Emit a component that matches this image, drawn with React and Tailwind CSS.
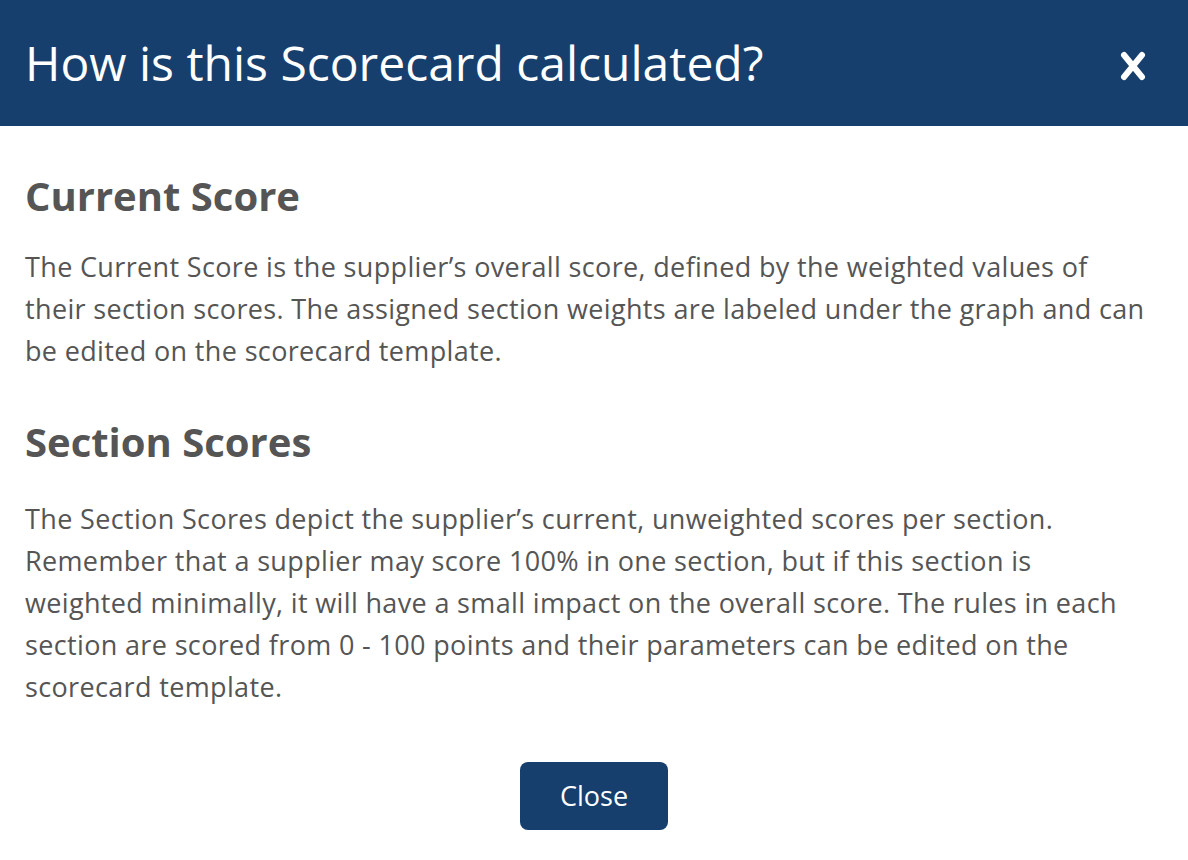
export default function App() {
  return (
    <div className="w-[1188px] h-[860px] bg-white font-['Open_Sans',sans-serif] text-[#555555]">
      {/* Header */}
      <div className="h-[126px] bg-[#173f6e] flex items-center justify-between pl-[25px] pr-[42px]">
        <h1 className="text-[48px] leading-none text-white font-normal">How is this Scorecard calculated?</h1>
        <button className="text-white mt-[5px]">
          <svg width="26" height="30" viewBox="0 0 26 30">
            <path d="M4 4 L22 26 M22 4 L4 26" stroke="white" strokeWidth="6" strokeLinecap="round" />
          </svg>
        </button>
      </div>

      {/* Body */}
      <div className="px-[25px] pt-[48px]">
        <h2 className="text-[40px] leading-[43px] font-bold text-[#555555]">Current Score</h2>
        <p className="mt-[29px] text-[27px] leading-[42px] tracking-[0.35px]">
          The Current Score is the supplier’s overall score, defined by the weighted values of<br />
          their section scores. The assigned section weights are labeled under the graph and can<br />
          be edited on the scorecard template.
        </p>

        <h2 className="mt-[48px] text-[40px] leading-[43px] font-bold text-[#555555]">Section Scores</h2>
        <p className="mt-[35px] text-[27px] leading-[42px] tracking-[0.35px]">
          The Section Scores depict the supplier’s current, unweighted scores per section.<br />
          Remember that a supplier may score 100% in one section, but if this section is<br />
          weighted minimally, it will have a small impact on the overall score. The rules in each<br />
          section are scored from 0 - 100 points and their parameters can be edited on the<br />
          scorecard template.
        </p>

        <div className="flex justify-center mt-[54px]">
          <button className="w-[148px] h-[68px] rounded-[8px] bg-[#173f6e] text-white text-[27px]">Close</button>
        </div>
      </div>
    </div>
  )
}
